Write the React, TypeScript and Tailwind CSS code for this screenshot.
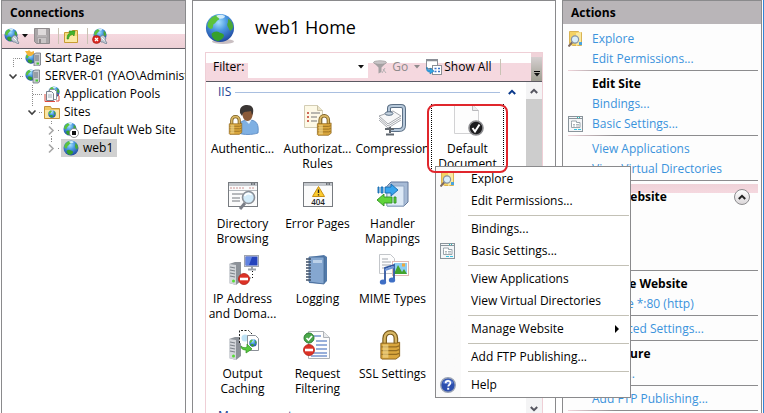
import React from "react";

const link = "text-[#3b93dc] hover:underline";

/* ---------- icons ---------- */

function GlobeShape({ x = 0, y = 0, s = 16 }: { x?: number; y?: number; s?: number }) {
  return (
    <svg x={x} y={y} width={s} height={s} viewBox="0 0 32 32">
      <defs>
        <radialGradient id="sea" cx="0.45" cy="0.3" r="0.75">
          <stop offset="0" stopColor="#a4e0fc" />
          <stop offset="0.4" stopColor="#4a98e2" />
          <stop offset="1" stopColor="#1a3f98" />
        </radialGradient>
      </defs>
      <circle cx="16" cy="16" r="15" fill="url(#sea)" />
      <path d="M3 11C5 5 10 2 15 2c1 2-1 3 0 5-3 1-3 4-6 5-1 3 0 5-3 5-3-1-4-3-3-6z" fill="#5cc23c" />
      <path d="M7 22c3-3 6-3 9-1 2 1 5 1 4 4-1 3-4 4-6 5-4-1-7-4-7-8z" fill="#36a02c" />
      <path d="M25 6c3 2 5 5 5 9-1 3-3 5-4 3-1-3-3-4-2-7 1-1 0-3 1-5z" fill="#4aa838" />
      <path d="M12 3c3-2 7-1 9 0 1 2-2 3-4 3s-4-1-5-3z" fill="#e6f8ff" opacity=".85" />
    </svg>
  );
}

const Svg = ({ s = 16, children }: { s?: number; children: React.ReactNode }) => (
  <svg width={s} height={s} viewBox={`0 0 ${s} ${s}`} className="shrink-0" aria-hidden="true">
    {children}
  </svg>
);

const Globe16 = () => <Svg><GlobeShape /></Svg>;

const Plug = () => (
  <g>
    <path d="M9 8l2-1 3 3-1 2 2 3-1 1-3-2-2 0-2-3z" fill="#c3ccd6" stroke="#6f7f92" strokeWidth=".8" />
    <path d="M9.500 9.500l3 3" stroke="#fff" strokeWidth="1" />
  </g>
);
const ConnectIcon = () => <Svg><GlobeShape s={14} /><Plug /></Svg>;
const DisconnectIcon = () => (
  <Svg>
    <GlobeShape x={1} s={14} />
    <Plug />
    <circle cx="4.500" cy="11.500" r="4" fill="#d92a22" stroke="#a81712" strokeWidth=".6" />
    <path d="M3 10l3 3M6 10l-3 3" stroke="#fff" strokeWidth="1.300" />
  </Svg>
);
const SaveIcon = () => (
  <Svg>
    <path d="M.5.5h15v15h-13l-2-2z" fill="#a9a5a7" stroke="#8f8b8d" />
    <path d="M4 1h8v6H4z" fill="#dedadb" />
    <path d="M4 10h8v5H4z" fill="#c9c5c6" />
    <path d="M5 11h2v4H5z" fill="#8f8b8d" />
    <path d="M3 8h10" stroke="#c4c0c1" />
  </Svg>
);
const UpFolderIcon = () => (
  <Svg>
    <path d="M1.500 4.500h7l1-2h5v12h-13z" fill="#f6dc7e" stroke="#c79c33" />
    <path d="M2 8h12v6H2z" fill="#fbe9a5" />
    <path d="M4 11c0-4 1-5 3-6l-1-2 6 0-1 5-1.500-1.500C7 7 6 8 5.500 11z" fill="#43b52c" stroke="#2c8a1c" strokeWidth=".6" />
  </Svg>
);
const Tower = ({ x = 9, y = 3 }: { x?: number; y?: number }) => (
  <g transform={`translate(${x} ${y})`}>
    <path d="M0 1l2-1h4.500v12L5 13H0z" fill="#c9cdd3" stroke="#70757d" strokeWidth=".8" />
    <path d="M1 3h4M1 5h4M1 7h4" stroke="#5f656e" strokeWidth=".9" />
    <rect x="2.500" y="9.500" width="2.500" height="2" fill="#4dcb35" />
  </g>
);
const StartPageIcon = () => (
  <Svg>
    <GlobeShape x={0} y={2} s={12} />
    <path d="M0 1h3l1-1 2 2 3-1v3l-3 2H3z" fill="#f3b53c" />
    <Tower />
  </Svg>
);
const ServerIcon = () => <Svg><GlobeShape y={1} s={12} /><Tower x={8} y={2} /></Svg>;
const PoolsIcon = () => (
  <Svg>
    <GlobeShape x={4} s={12} />
    <path d="M5.500 3.500h5l2 2v8h-7z" fill="#fff" stroke="#8b929b" />
    <path d="M2.500 5.500h5l2 2v7h-7z" fill="#f5f7f9" stroke="#7a828c" />
    <path d="M1 8v7.500h10M13 8l2 2v5h-3" fill="none" stroke="#dc4a3c" />
    <path d="M4 9h4M4 11h4" stroke="#a9b1bb" />
  </Svg>
);
const SitesIcon = () => (
  <Svg>
    <path d="M.5 2.500h6l1 2h8v10H.5z" fill="#efc860" stroke="#c3933a" />
    <path d="M1 6h14v8H1z" fill="#fbe7a4" />
    <GlobeShape x={4} y={6} s={8} />
  </Svg>
);
const StoppedSiteIcon = () => (
  <Svg>
    <GlobeShape s={14} />
    <circle cx="11" cy="11" r="4.500" fill="#fff" stroke="#777" strokeWidth=".8" />
    <rect x="9" y="9" width="4" height="4" fill="#111" />
  </Svg>
);
const ExploreIcon = () => (
  <Svg>
    <path d="M1.500.5h9l1 1h2v13h-9l-3-2z" fill="#f4d263" stroke="#d1a63c" strokeWidth=".8" />
    <path d="M8 2l5-1v12l-5 2z" fill="#fae9a0" />
    <rect x="11" y="11" width="3" height="3" fill="#4aa3dd" />
    <path d="M4.500 11L.5 15.500" stroke="#7e6a62" strokeWidth="2" />
    <circle cx="7" cy="8.500" r="3.600" fill="#d9eefb" stroke="#8694a6" strokeWidth="1.200" />
  </Svg>
);
const SettingsIcon = () => (
  <Svg>
    <rect x=".5" y=".5" width="14" height="15" fill="#f4f6f8" stroke="#8a949b" />
    <path d="M1 2.500h13" stroke="#8a949b" />
    <path d="M9 1.500h1M11 1.500h1" stroke="#2bb" />
    <path d="M3.500 6.500v5h8.500v-5H8.500v-1.500h-5z" fill="#fff" stroke="#9aa4ab" />
    <path d="M5 8.500h2M5 10h2M8 8.500h3M8 10h3" stroke="#9aa4ab" strokeWidth=".8" />
    <path d="M6 13.500h3M10 13.500h3" stroke="#35c4e2" strokeWidth="1.200" />
  </Svg>
);
const HelpIcon = () => (
  <Svg>
    <circle cx="8" cy="8" r="7.300" fill="#2c4fae" stroke="#9aa3b5" strokeWidth="1.400" />
    <path d="M2.500 6a6 6 0 0111 0c-3 1.500-8 1.500-11 0z" fill="#6d8fdc" opacity=".7" />
    <path d="M5.600 6.300C5.600 3.200 10.400 3.200 10.400 6c0 1.700-2.200 1.800-2.200 3.600" fill="none" stroke="#fff" strokeWidth="1.700" />
    <rect x="7.200" y="10.800" width="2" height="1.900" fill="#fff" />
  </Svg>
);
const FunnelIcon = () => (
  <Svg>
    <path d="M1.500 3.500c2-2 11-2 13 0l-5 5v4.500l-3 1.500V8.500z" fill="#a5a1a3" />
    <ellipse cx="8" cy="3.500" rx="6.500" ry="1.800" fill="#c9c5c7" stroke="#989496" strokeWidth=".6" />
    <path d="M11 10l3 4M13 9l-3 5" stroke="#b5b1b3" />
  </Svg>
);
const ShowAllIcon = () => (
  <Svg>
    <rect x=".5" y=".5" width="11" height="9" fill="#fff" stroke="#8b8f96" />
    <path d="M1 1.500h10" stroke="#8b8f96" strokeWidth="1.500" />
    <rect x="6.500" y="6.500" width="9" height="9" fill="#fff" stroke="#8b8f96" />
    <path d="M8.500 9.500h2M12 9.500h2M8.500 12.500h2M12 12.500h2" stroke="#3b74c9" strokeWidth="1.600" />
    <path d="M1 8c0 2 1 3 3 3V9l4 3-4 3v-2c-3 0-4-2-3-5z" fill="#35a7e6" stroke="#1775b5" strokeWidth=".6" />
  </Svg>
);

const Padlock = ({ x, y, s }: { x: number; y: number; s: number }) => (
  <svg x={x} y={y} width={s * 0.75} height={s} viewBox="0 0 24 32">
    <path d="M6 16V9c0-8.500 12-8.500 12 0v7" fill="none" stroke="#7a5c1d" strokeWidth="5" />
    <path d="M6 16V9c0-8.500 12-8.500 12 0v7" fill="none" stroke="#d8b765" strokeWidth="2.500" />
    <path d="M2 14l17 0 3-1v15l-4 3H3l-1-1z" fill="#d9a63d" stroke="#8a6119" />
    <path d="M2.500 18h16l3-1M2.500 22h16l3-1M2.500 26h16l3-1" fill="none" stroke="#956d20" strokeWidth="1.300" />
    <path d="M4 15.500h6v14H4z" fill="#f5dd95" opacity=".6" />
  </svg>
);
const BigTower = ({ x, y }: { x: number; y: number }) => (
  <g transform={`translate(${x} ${y})`}>
    <path d="M0 2l6-2h6v19l-5 4-7-2z" fill="#8d9299" />
    <path d="M0 2l7 1v20l-7-2z" fill="#d3d6da" />
    <path d="M1 5l5 1M1 8l5 1M1 11l5 1M1 14l5 1" stroke="#7d838a" strokeWidth="1.200" />
    <circle cx="4.500" cy="19" r="1.500" fill="#58dc36" />
  </g>
);
const NoEntry = ({ x, y }: { x: number; y: number }) => (
  <g>
    <circle cx={x} cy={y} r="5.500" fill="#dd3226" stroke="#b12219" strokeWidth=".8" />
    <rect x={x - 4} y={y - 1.3} width="8" height="2.600" fill="#fff" />
  </g>
);

const AuthenticationIcon = () => (
  <Svg s={32}>
    <path d="M11 29c-1-8 2-12 8-13h5c6 1 8 5 7 13-6 2-14 2-20 0z" fill="#7fb0e3" stroke="#5384bf" strokeWidth=".8" />
    <path d="M17 15h8l-3 5z" fill="#e9f3fc" />
    <path d="M15 7c0 6 2 10 5.500 10S26 13 26 7z" fill="#8b5a38" />
    <path d="M13 9C12 2 17 1 20 1c5 0 7 3 6 8l-1 2-1-4c-3 1-6 0-8 2l-1 3z" fill="#3b3634" />
    <Padlock x={1} y={11} s={20} />
  </Svg>
);
const AuthorizationIcon = () => (
  <Svg s={32}>
    <path d="M2.500 1.500h13l5 5v17h-18z" fill="#fdf9e6" stroke="#d3cdb4" />
    <path d="M15.500 1.500v5h5" fill="#ebe5cb" stroke="#c8c1a5" />
    <path d="M5 9h2M5 13h2M5 17h2" stroke="#c0392b" strokeWidth="1.500" />
    <path d="M9 9h9M9 13h6M9 17h6" stroke="#777" strokeWidth="1.200" />
    <Padlock x={14} y={10} s={22} />
  </Svg>
);
const CompressionIcon = () => (
  <Svg s={32}>
    <path d="M2 12l14-5 8 5-13 8z" fill="#f7f7f8" stroke="#a3a6ac" />
    <path d="M2 14l9 8 13-8M2 16l9 8 13-8" fill="none" stroke="#a7aab0" />
    <path d="M12 8V4c0-2 2-2 4-2h8c2 0 3 1 3 3v16c0 4-2 5-5 5h-8" fill="none" stroke="#5b6f85" strokeWidth="4" />
    <path d="M12 8V4c0-2 2-2 4-2h8c2 0 3 1 3 3v16c0 4-2 5-5 5h-8" fill="none" stroke="#b6c8da" strokeWidth="2" />
    <ellipse cx="12" cy="9.500" rx="4" ry="1.800" fill="#c6d3e0" stroke="#5b6f85" />
    <path d="M13 23v6M9 30.500h8M8 25h9" stroke="#5f666e" strokeWidth="2" />
  </Svg>
);
const DefaultDocumentIcon = () => (
  <Svg s={32}>
    <path d="M2.500.5h18l6 6v23h-24z" fill="#fdfdfd" stroke="#d2d2d4" />
    <path d="M20.500.5v6h6" fill="#eee" stroke="#b9b9bc" />
    <circle cx="24" cy="24" r="7" fill="#1d1d1f" stroke="#8d8d90" strokeWidth="1.600" />
    <path d="M20.500 24l2.500 3.500 4.500-7" fill="none" stroke="#fff" strokeWidth="2" />
  </Svg>
);
const WindowFrame = ({ h }: { h: number }) => (
  <g>
    <rect x="1.500" y="3.500" width="29" height={h} fill="#fbfbfb" stroke="#777b80" />
    <path d="M2 5.500h28" stroke="#c3c7cc" strokeWidth="3" />
    <path d="M24 5h1.500M26.500 5H28" stroke="#51565c" strokeWidth="1.500" />
  </g>
);
const DirectoryIcon = () => (
  <Svg s={32}>
    <WindowFrame h={24} />
    <path d="M3 9h14M22 9h5" stroke="#cc9392" strokeDasharray="2 1" />
    <path d="M2 11.500h28" stroke="#b5babf" />
    <path d="M5 19h8M5 22h8" stroke="#73777c" />
    <path d="M5 15h11" stroke="#73777c" />
    <path d="M18 24l-5 6" stroke="#7b7f87" strokeWidth="3" />
    <circle cx="21.500" cy="18.500" r="6" fill="#d3ecfa" stroke="#8b9098" strokeWidth="1.600" />
    <path d="M17.500 17c2-3 5-3 7-1" stroke="#fff" strokeWidth="1.600" fill="none" />
  </Svg>
);
const ErrorPagesIcon = () => (
  <Svg s={32}>
    <WindowFrame h={24} />
    <path d="M16.500 7.500l6 10h-12z" fill="#fccb2e" stroke="#c78f13" strokeLinejoin="round" />
    <path d="M16.500 10.500v3.500M16.500 15.200v1.300" stroke="#222" strokeWidth="1.400" />
    <text x="16" y="26" textAnchor="middle" fontSize="8" fontWeight="600" fill="#222">404</text>
  </Svg>
);
const HandlerIcon = () => (
  <Svg s={32}>
    <path d="M10 7l4-4h17v20l-4 4H10z" fill="#a7bbd6" stroke="#65799a" />
    <path d="M10 7h17v20H10z" fill="#dde9f6" stroke="#8fa5c3" />
    <path d="M1 8h1v6H1zM4 8h2v6H4zM8 8h6V5l7 6-7 6v-3H8z" fill="#39a5ee" stroke="#1568ab" strokeWidth=".9" />
    <path d="M19 18h-2v6h2zM15 18H7v-3l-7 6 7 6v-3h8z" fill="#5fd33a" stroke="#2f9122" strokeWidth=".9" />
  </Svg>
);
const IpIcon = () => (
  <Svg s={32}>
    <BigTower x={2} y={8} />
    <rect x="17.500" y="1.500" width="14" height="11" fill="#e4e7ec" stroke="#9fa5af" />
    <path d="M18.500 2.500h12v9h-12z" fill="#2443bd" />
    <path d="M19 3h6l-3 8h-3z" fill="#6f93ea" opacity=".8" />
    <path d="M21 15.500h8M25 12v3" stroke="#9ba1aa" strokeWidth="2" />
    <path d="M25.500 17v7h-5" fill="none" stroke="#111" strokeDasharray="1 2" />
    <NoEntry x={17} y={25} />
  </Svg>
);
const LoggingIcon = () => (
  <Svg s={32}>
    <path d="M7 3l15-2 3 2v24l-3 3-15-1z" fill="#537aa9" />
    <path d="M7 3h15v27L7 28z" fill="#85a7d0" stroke="#456a98" strokeWidth=".8" />
    <path d="M11 6h9v3h-9z" fill="#bcd1e9" />
    <path d="M4 5h5M4 8h5M4 11h5M4 14h5M4 17h5M4 20h5M4 23h5M4 26h5" stroke="#40516a" strokeWidth="1.300" />
  </Svg>
);
const MimeIcon = () => (
  <Svg s={32}>
    <path d="M2.500.5h11l4 4v15h-15z" fill="#fdfdfd" stroke="#c3c6ca" />
    <path d="M5 5h6M5 8h9M5 11h9M5 14h5" stroke="#a2a7ad" />
    <rect x="15.500" y="7.500" width="16" height="14" fill="#fff" stroke="#e0b9b4" />
    <path d="M17 9h13v11H17z" fill="#8fcdf2" />
    <path d="M17 20l4-9 4 7 2-3 3 5z" fill="#43a32e" />
    <rect x="25" y="9.500" width="3" height="3" fill="#f0a83c" />
    <path d="M8 27V14l9-3v14" fill="none" stroke="#3157a0" strokeWidth="1.800" />
    <path d="M8 16l9-3" stroke="#6f95d7" strokeWidth="2" />
    <ellipse cx="6" cy="28" rx="3.200" ry="2.600" fill="#3f6fc5" />
    <ellipse cx="15" cy="26" rx="3.200" ry="2.600" fill="#3f6fc5" />
  </Svg>
);
const OutputIcon = () => (
  <Svg s={32}>
    <BigTower x={2} y={8} />
    <path d="M12.500 14V1.500h9l4 4V16" fill="#fff" stroke="#222" strokeDasharray="2 1.500" />
    <circle cx="18" cy="9" r="3.500" fill="#bfe2f5" />
    <path d="M20.500 6.500h8l3 3v12h-11z" fill="#fff" stroke="#8b9098" />
    <GlobeShape x={22} y={10} s={8} />
    <path d="M14 17c2 2 4 2 6 1v-3l5 5-6 4v-3c-3 0-5-1-5-4z" fill="#57c83c" stroke="#2f9122" strokeWidth=".7" />
  </Svg>
);
const RequestIcon = () => (
  <Svg s={32}>
    <path d="M6.500 2.500h15l6 6v21h-21z" fill="#fdfdfd" stroke="#aeb2b7" />
    <path d="M21.500 2.500v6h6" fill="#e8eaec" stroke="#aeb2b7" />
    <path d="M12 7h7M14 12h11M14 16h11M14 20h11M9 24h16M9 27h16" stroke="#3562b8" strokeWidth="1.200" />
    <circle cx="7" cy="9" r="5" fill="#4aa84a" stroke="#2c7c31" />
    <path d="M4.500 9l2 2 3.500-4" fill="none" stroke="#fff" strokeWidth="1.700" />
    <NoEntry x={7} y={21} />
  </Svg>
);
const SslIcon = () => <Svg s={32}><Padlock x={2} y={1} s={30} /></Svg>;

const Caret = ({ color = "#111" }: { color?: string }) => (
  <svg width="6" height="4" viewBox="0 0 6 4" className="shrink-0"><path d="M0 0h6L3 3.500z" fill={color} /></svg>
);
const Chevron = ({ color, down = false }: { color: string; down?: boolean }) => (
  <svg width="8" height="6" viewBox="0 0 8 6" className="shrink-0">
    <path d={down ? "M.8 1L4 4.200 7.200 1" : "M.8 5L4 1.800 7.200 5"} fill="none" stroke={color} strokeWidth="2" />
  </svg>
);

/* ---------- connections ---------- */

const panel = "flex flex-col overflow-hidden border border-b-0 border-[#8a8a8c]";
const panelTitle = "h-[23px] shrink-0 bg-[#b9b5b8] px-2 text-xs leading-6 font-bold";
const ToolSep = () => <span className="h-4 w-px bg-[#c9c2b4]" />;

type Node = { label: string; icon: React.ReactNode; indent: string; lines: string; state?: "open" | "closed"; selected?: boolean };
const nodes: Node[] = [
  { label: "Start Page", icon: <StartPageIcon />, indent: "pl-[3px]", lines: "M8.500 18V9.500H19" },
  { label: "SERVER-01 (YAO\\Administrator)", icon: <ServerIcon />, indent: "pl-[3px]", lines: "M15 9.500h4", state: "open" },
  { label: "Application Pools", icon: <PoolsIcon />, indent: "pl-[22px]", lines: "M8.500 0v18M9 9.500h10" },
  { label: "Sites", icon: <SitesIcon />, indent: "pl-[22px]", lines: "M8.500 0v4M15 9.500h4", state: "open" },
  { label: "Default Web Site", icon: <StoppedSiteIcon />, indent: "pl-[41px]", lines: "M8.500 0v4M15 9.500h2M8.500 15v3", state: "closed" },
  { label: "web1", icon: <Globe16 />, indent: "pl-[41px]", lines: "M8.500 0v4M15 9.500h2", state: "closed", selected: true },
];

function Connections() {
  return (
    <section className={`${panel} w-[185px] shrink-0`}>
      <h2 className={panelTitle}>Connections</h2>
      <div className="flex h-[25px] shrink-0 items-center border-b border-[#5c5962] bg-linear-to-b from-white from-42% via-[#f5d8df] via-42% to-[#eccfd5] px-0.5">
        <button aria-label="Connect" className="flex items-center gap-0.5"><ConnectIcon /><Caret /></button>
        <button aria-label="Save" className="ml-1.5"><SaveIcon /></button>
        <span className="ml-2 flex"><ToolSep /></span>
        <button aria-label="Up" className="ml-1"><UpFolderIcon /></button>
        <span className="ml-2 flex"><ToolSep /></span>
        <button aria-label="Disconnect" className="ml-1"><DisconnectIcon /></button>
      </div>
      <ul role="tree">
        {nodes.map((n) => (
          <li key={n.label} role="treeitem" aria-selected={!!n.selected} className={`flex h-[18px] items-center whitespace-nowrap ${n.indent}`}>
            <svg width="18" height="18" viewBox="0 0 18 18" className="shrink-0">
              <path d={n.lines} fill="none" stroke="#8c8c8c" strokeDasharray="1 1" />
              {n.state === "open" && <path d="M4.500 7.500l3.500 3.500 3.500-3.500" fill="none" stroke="#404040" strokeWidth="1.600" />}
              {n.state === "closed" && <path d="M6 5.500l4 4-4 4" fill="none" stroke="#a6a6a6" strokeWidth="1.600" />}
            </svg>
            <span className={`flex h-[18px] items-center gap-1 pr-1 pl-0.5 ${n.selected ? "bg-[#d0d0d0]" : ""}`}>
              {n.icon}
              {n.label}
            </span>
          </li>
        ))}
      </ul>
    </section>
  );
}

/* ---------- home ---------- */

const features: { label: string; icon: React.ReactNode; focused?: boolean }[] = [
  { label: "Authentic...", icon: <AuthenticationIcon /> },
  { label: "Authorizat... Rules", icon: <AuthorizationIcon /> },
  { label: "Compression", icon: <CompressionIcon /> },
  { label: "Default Document", icon: <DefaultDocumentIcon />, focused: true },
  { label: "Directory Browsing", icon: <DirectoryIcon /> },
  { label: "Error Pages", icon: <ErrorPagesIcon /> },
  { label: "Handler Mappings", icon: <HandlerIcon /> },
  { label: "HTTP Respon...", icon: <ErrorPagesIcon /> },
  { label: "IP Address and Doma...", icon: <IpIcon /> },
  { label: "Logging", icon: <LoggingIcon /> },
  { label: "MIME Types", icon: <MimeIcon /> },
  { label: "Modules", icon: <HandlerIcon /> },
  { label: "Output Caching", icon: <OutputIcon /> },
  { label: "Request Filtering", icon: <RequestIcon /> },
  { label: "SSL Settings", icon: <SslIcon /> },
];

function GroupTitle({ label }: { label: string }) {
  return (
    <h3 className="flex h-5 items-center gap-1 pr-2.5 pl-3 text-[#1d3f94]">
      {label}
      <span className="h-px flex-1 bg-[#a9bfe0]" />
      <span className="pl-1"><Chevron color="#0b3a8c" /></span>
    </h3>
  );
}

function Home() {
  return (
    <main className={`${panel} min-w-0 flex-1 px-3`}>
      <header className="flex h-[51px] shrink-0 items-center gap-5 pt-1">
        <svg width="30" height="32" viewBox="0 0 30 32" className="shrink-0" aria-hidden="true">
          <ellipse cx="18" cy="28.500" rx="11" ry="2.500" fill="#c9bfc2" />
          <GlobeShape s={30} />
        </svg>
        <h1 className="pb-1 text-lg leading-6">web1 Home</h1>
      </header>
      <div className="flex min-h-0 flex-1 flex-col border border-b-0 border-[#efcfd6]">
        <div className="flex h-[29px] shrink-0 items-stretch border-b border-[#5c5962] bg-linear-to-b from-white from-35% to-[#f5d8df] to-35%">
          <div className="flex flex-1 items-center pl-[7px]">
            <label htmlFor="filter">Filter:</label>
            <div className="ml-1 flex h-[22px] items-center bg-white pr-1">
              <input id="filter" className="h-[22px] w-[110px] px-1 outline-none" />
              <button aria-label="Filter history"><Caret /></button>
            </div>
            <button className="ml-1 flex items-center gap-1 text-[#8e8a8c]"><FunnelIcon />Go</button>
            <button aria-label="Go options" className="ml-1.5 flex"><Caret color="#8e8a8c" /></button>
            <button className="ml-1.5 flex items-center gap-0.5 whitespace-nowrap"><ShowAllIcon />Show All</button>
            <span className="ml-2 flex"><ToolSep /></span>
          </div>
          <button aria-label="Toolbar options" className="flex w-[11px] flex-col items-center justify-end gap-px bg-linear-to-b from-[#f0d3d9] from-15% via-[#d5cfd0] via-15% to-[#a09f92] pb-1">
            <span className="h-px w-1.5 bg-black" />
            <Caret />
          </button>
        </div>
        <div className="flex min-h-0 flex-1">
          <div className="min-w-0 flex-1 overflow-hidden">
            <GroupTitle label="IIS" />
            <ul className="my-0.5 grid grid-cols-[repeat(auto-fill,73px)] gap-x-0.5">
              {features.map((f) => (
                <li key={f.label} className="relative h-[75px]">
                  <button className={`flex w-full flex-col items-center gap-[5px] leading-[15px] ${f.focused ? "border-x border-dotted border-black" : ""}`}>
                    {f.icon}
                    <span>{f.label}</span>
                  </button>
                  {f.focused && <span className="pointer-events-none absolute top-0 -right-1 -left-1 z-20 h-[69px] rounded-lg border-2 border-[#e0262c]" />}
                </li>
              ))}
            </ul>
            <GroupTitle label="Management" />
          </div>
          <div className="flex w-4 shrink-0 flex-col items-center bg-[#f4f4f5]">
            <button aria-label="Scroll up" className="flex h-[17px] items-center"><Chevron color="#55555f" /></button>
            <span className="w-full flex-1 bg-[#cdcdcd]" />
            <span className="h-16" />
            <button aria-label="Scroll down" className="flex h-2 items-center"><Chevron color="#55555f" down /></button>
          </div>
        </div>
      </div>
    </main>
  );
}

/* ---------- actions ---------- */

const Rule = () => <hr className="mt-px mb-[3px] h-px border-0 bg-linear-to-r from-[#f0d5db] to-[#8c8c8e] to-25%" />;

function Action({ label, icon }: { label: string; icon?: React.ReactNode }) {
  return (
    <li className="flex h-5 items-center">
      <span className="w-6 shrink-0">{icon}</span>
      <a href="#" className={`${link} whitespace-nowrap`}>{label}</a>
    </li>
  );
}
const Heading = ({ label }: { label: string }) => <li className="h-5 pl-6 leading-5 font-bold">{label}</li>;

function Actions() {
  return (
    <section className={`${panel} w-[200px] shrink-0 bg-[#fdfdfd]`}>
      <h2 className={panelTitle}>Actions</h2>
      <ul className="pt-[5px] pr-[3px] pl-[5px]">
        <Action label="Explore" icon={<ExploreIcon />} />
        <Action label="Edit Permissions..." />
        <Rule />
        <Heading label="Edit Site" />
        <Action label="Bindings..." />
        <Action label="Basic Settings..." icon={<SettingsIcon />} />
        <Rule />
        <Action label="View Applications" />
        <Action label="View Virtual Directories" />
        <Rule />
        <li className="flex h-[25px] items-center justify-between bg-linear-to-b from-[#efd2d8] from-0% via-[#f5d8df] via-36% to-[#fdfdfd] to-36% pr-2 font-bold">
          Manage Website
          <button aria-label="Collapse" className="flex size-4 items-center justify-center rounded-full border border-[#8c8c8e] bg-linear-to-b from-white to-[#dcd8da]">
            <Chevron color="#222" />
          </button>
        </li>
        <li className="pb-5">
          <ul>
            <Action label="Start" />
            <Action label="Stop" />
          </ul>
        </li>
        <Rule />
        <Heading label="Browse Website" />
        <Action label="Browse *:80 (http)" />
        <Rule />
        <Action label="Advanced Settings..." />
        <Rule />
        <Heading label="Configure" />
        <Action label="Limits..." />
        <Rule />
        <Action label="Add FTP Publishing..." />
        <Rule />
      </ul>
    </section>
  );
}

/* ---------- context menu ---------- */

const menuGroups: { label: string; icon?: React.ReactNode; sub?: boolean }[][] = [
  [{ label: "Explore", icon: <ExploreIcon /> }, { label: "Edit Permissions..." }],
  [{ label: "Bindings..." }, { label: "Basic Settings...", icon: <SettingsIcon /> }],
  [{ label: "View Applications" }, { label: "View Virtual Directories" }],
  [{ label: "Manage Website", sub: true }],
  [{ label: "Add FTP Publishing..." }],
  [{ label: "Help", icon: <HelpIcon /> }],
];

function ContextMenu() {
  return (
    <div role="menu" className="absolute top-[166px] left-[435px] z-10 w-[196px] border border-[#8a8a8c] bg-linear-to-r from-[#fafafa] from-[25px] to-white to-[25px] py-px pr-px">
      {menuGroups.map((group, i) => (
        <React.Fragment key={i}>
          {i > 0 && <hr className="mt-[3px] mb-0.5 ml-8 h-px border-0 bg-[#c3c1b6]" />}
          {group.map((item) => (
            <button key={item.label} role="menuitem" className="flex h-[22px] w-full items-center pr-2.5 pl-1 text-left">
              <span className="w-[31px] shrink-0">{item.icon}</span>
              <span className="flex-1 whitespace-nowrap">{item.label}</span>
              {item.sub && <svg width="4" height="8" viewBox="0 0 4 8"><path d="M0 0l4 4-4 4z" fill="#000" /></svg>}
            </button>
          ))}
        </React.Fragment>
      ))}
    </div>
  );
}

export default function App() {
  return (
    <div className="relative flex h-screen overflow-hidden border-r border-[#2f86d6] bg-white pr-px pl-px font-['Open_Sans','Noto_Sans',sans-serif] text-xs text-black">
      <Connections />
      <div className="w-1.5 shrink-0" />
      <Home />
      <div className="w-1.5 shrink-0" />
      <Actions />
      <ContextMenu />
    </div>
  );
}
